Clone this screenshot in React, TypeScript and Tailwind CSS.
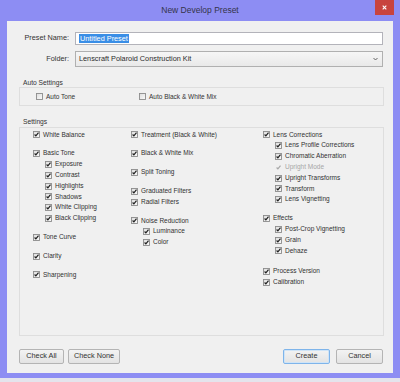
import React from 'react';

type Item = { label: string; sub?: boolean; disabled?: boolean };

const col1: Item[][] = [
  [{ label: 'White Balance' }],
  [
    { label: 'Basic Tone' },
    { label: 'Exposure', sub: true },
    { label: 'Contrast', sub: true },
    { label: 'Highlights', sub: true },
    { label: 'Shadows', sub: true },
    { label: 'White Clipping', sub: true },
    { label: 'Black Clipping', sub: true },
  ],
  [{ label: 'Tone Curve' }],
  [{ label: 'Clarity' }],
  [{ label: 'Sharpening' }],
];

const col2: Item[][] = [
  [{ label: 'Treatment (Black & White)' }],
  [{ label: 'Black & White Mix' }],
  [{ label: 'Split Toning' }],
  [{ label: 'Graduated Filters' }, { label: 'Radial Filters' }],
  [
    { label: 'Noise Reduction' },
    { label: 'Luminance', sub: true },
    { label: 'Color', sub: true },
  ],
];

const col3: Item[][] = [
  [
    { label: 'Lens Corrections' },
    { label: 'Lens Profile Corrections', sub: true },
    { label: 'Chromatic Aberration', sub: true },
    { label: 'Upright Mode', sub: true, disabled: true },
    { label: 'Upright Transforms', sub: true },
    { label: 'Transform', sub: true },
    { label: 'Lens Vignetting', sub: true },
  ],
  [
    { label: 'Effects' },
    { label: 'Post-Crop Vignetting', sub: true },
    { label: 'Grain', sub: true },
    { label: 'Dehaze', sub: true },
  ],
  [{ label: 'Process Version' }, { label: 'Calibration' }],
];

function CheckBox({ checked = true, disabled = false }: { checked?: boolean; disabled?: boolean }) {
  return (
    <svg width="7" height="7" viewBox="0 0 7 7" className="shrink-0">
      <defs>
        <linearGradient id="cbg" x1="0" y1="0" x2="1" y2="1">
          <stop offset="0" stopColor="#dcdcdc" />
          <stop offset="1" stopColor="#fbfbfb" />
        </linearGradient>
      </defs>
      {!disabled && <rect x="0.5" y="0.5" width="6" height="6" fill="url(#cbg)" stroke="#8c8c8c" strokeWidth="0.9" />}
      {checked && (
        <path
          d="M1.6 3.5 L2.9 4.9 L5.5 1.7"
          fill="none"
          stroke={disabled ? '#a8a8a8' : '#1e1e1e'}
          strokeWidth="1.2"
        />
      )}
    </svg>
  );
}

function Row({ item }: { item: Item }) {
  return (
    <div className={`flex h-[10.8px] items-center gap-[3px] ${item.sub ? 'pl-[12px]' : ''}`}>
      <CheckBox disabled={item.disabled} />
      <span className={`text-[6.5px] leading-none whitespace-nowrap ${item.disabled ? 'text-[#a6a6a6]' : 'text-[#303030]'}`}>
        {item.label}
      </span>
    </div>
  );
}

function Column({ groups, width, lastGap }: { groups: Item[][]; width: string; lastGap?: boolean }) {
  return (
    <div className={`flex flex-col gap-[8px] ${width}`}>
      {groups.map((g, i) => (
        <div key={i} className={`flex flex-col ${lastGap && i === groups.length - 1 ? 'mt-[2px]' : ''}`}>
          {g.map((it) => (
            <Row key={it.label} item={it} />
          ))}
        </div>
      ))}
    </div>
  );
}

function Button({ label, primary }: { label: string; primary?: boolean }) {
  return (
    <div
      className={`flex h-[15px] items-center justify-center rounded-[2px] border bg-gradient-to-b from-[#f3f3f3] to-[#e3e3e3] text-[7.3px] text-[#333] ${
        primary ? 'border-[#7eb4ea] shadow-[inset_0_0_0_1px_#cfe4f7]' : 'border-[#b4b4b4]'
      }`}
    >
      {label}
    </div>
  );
}

export default function App() {
  return (
    <div className="h-[382px] w-[400px] bg-[#e4e4ec] font-['Liberation_Sans',Arial,sans-serif]">
      <div className="flex h-[378px] w-[400px] flex-col bg-[#8d8df3]">
        <div className="relative flex h-[21px] shrink-0 items-center justify-center">
          <span className="text-[8.5px] text-[#34344a]">New Develop Preset</span>
          <div className="absolute right-[6px] top-0 flex h-[15px] w-[19px] items-center justify-center bg-[#c8433e]">
            <svg width="5" height="5" viewBox="0 0 5 5">
              <path d="M0.7 0.7 L4.3 4.3 M4.3 0.7 L0.7 4.3" stroke="#fff" strokeWidth="1.1" />
            </svg>
          </div>
        </div>

        <div className="mx-[7px] flex h-[352px] flex-col bg-[#f0f0f0] pt-[11px]">
          <div className="flex h-[13px] items-center gap-[6px]">
            <div className="w-[62px] text-right text-[7.3px] text-[#333]">Preset Name:</div>
            <div className="flex h-[13px] w-[308px] items-center border border-[#b3b3ba] bg-white pl-[3px]">
              <span className="bg-[#3a8ee6] px-[1px] text-[7.3px] leading-[9px] text-white">Untitled Preset</span>
            </div>
          </div>
          <div className="mt-[6px] flex h-[16px] items-center gap-[6px]">
            <div className="w-[62px] text-right text-[7.3px] text-[#333]">Folder:</div>
            <div className="flex h-[16px] w-[308px] items-center justify-between border border-[#b0b0b0] bg-gradient-to-b from-[#f6f6f6] to-[#e9e9e9] pl-[3px] pr-[4px]">
              <span className="text-[7.3px] text-[#2c2c2c]">Lenscraft Polaroid Construction Kit</span>
              <svg width="5" height="4" viewBox="0 0 5 4">
                <path d="M0.5 1 L2.5 3 L4.5 1" fill="none" stroke="#555" strokeWidth="0.9" />
              </svg>
            </div>
          </div>

          <div className="ml-[16px] mt-[10.5px] h-[9px] text-[6.7px] leading-[9px] text-[#333]">Auto Settings</div>
          <div className="ml-[12px] mt-[0.5px] flex h-[19px] w-[365px] items-center border border-[#dedede] pl-[16px]">
            <div className="flex w-[103px] items-center gap-[3px]">
              <CheckBox checked={false} />
              <span className="text-[6.5px] text-[#333]">Auto Tone</span>
            </div>
            <div className="flex items-center gap-[3px]">
              <CheckBox checked={false} />
              <span className="text-[6.5px] text-[#333]">Auto Black &amp; White Mix</span>
            </div>
          </div>

          <div className="ml-[16px] mt-[10.5px] h-[9px] text-[6.7px] leading-[9px] text-[#333]">Settings</div>
          <div className="ml-[12px] mt-[1.5px] flex h-[209px] w-[365px] border border-[#dedede] pl-[13px] pt-[1.5px]">
            <Column groups={col1} width="w-[98px]" />
            <Column groups={col2} width="w-[132px]" />
            <Column groups={col3} width="w-[110px]" lastGap />
          </div>

          <div className="ml-[12px] mt-[13px] flex w-[364px] items-center">
            <div className="w-[45px]">
              <Button label="Check All" />
            </div>
            <div className="ml-[4px] w-[52px]">
              <Button label="Check None" />
            </div>
            <div className="ml-auto w-[47px]">
              <Button label="Create" primary />
            </div>
            <div className="ml-[6px] w-[47px]">
              <Button label="Cancel" />
            </div>
          </div>
        </div>
      </div>
    </div>
  );
}
